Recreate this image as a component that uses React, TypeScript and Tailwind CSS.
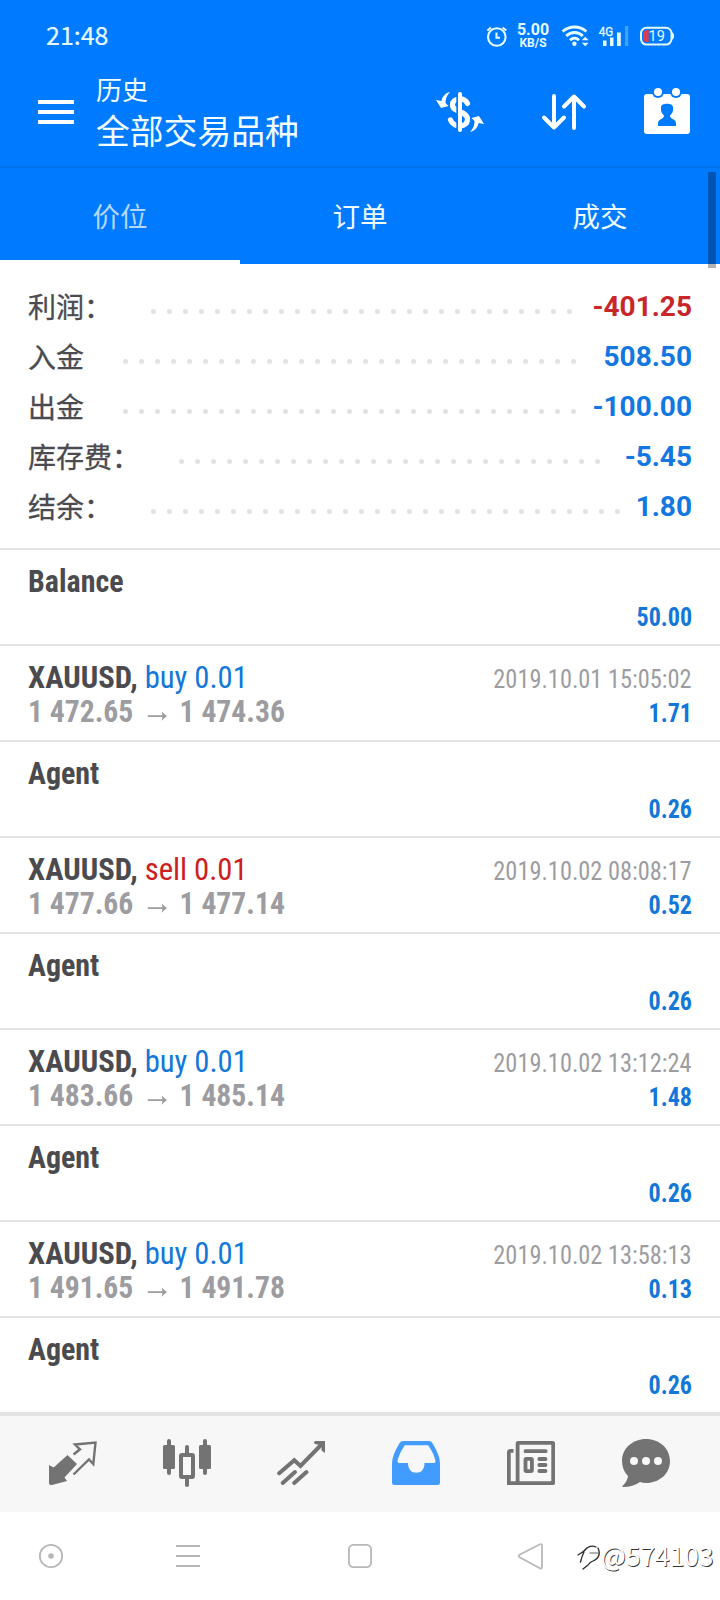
import React from "react";

type Trade = { side?: "buy" | "sell"; title: string; from?: string; to?: string; date?: string; amount: string };

const summary = [
  { label: "利润：", value: "-401.25", dots: 27, color: "text-[#c8262a]" },
  { label: "入金", value: "508.50", dots: 29, color: "text-[#1277e0]" },
  { label: "出金", value: "-100.00", dots: 29, color: "text-[#1277e0]" },
  { label: "库存费：", value: "-5.45", dots: 27, color: "text-[#1277e0]" },
  { label: "结余：", value: "1.80", dots: 30, color: "text-[#1277e0]" },
];

const trades: Trade[] = [
  { title: "Balance", amount: "50.00" },
  { title: "XAUUSD,", side: "buy", from: "1 472.65", to: "1 474.36", date: "2019.10.01 15:05:02", amount: "1.71" },
  { title: "Agent", amount: "0.26" },
  { title: "XAUUSD,", side: "sell", from: "1 477.66", to: "1 477.14", date: "2019.10.02 08:08:17", amount: "0.52" },
  { title: "Agent", amount: "0.26" },
  { title: "XAUUSD,", side: "buy", from: "1 483.66", to: "1 485.14", date: "2019.10.02 13:12:24", amount: "1.48" },
  { title: "Agent", amount: "0.26" },
  { title: "XAUUSD,", side: "buy", from: "1 491.65", to: "1 491.78", date: "2019.10.02 13:58:13", amount: "0.13" },
  { title: "Agent", amount: "0.26" },
];

function StatusBar() {
  return (
    <div className="flex h-[72px] items-start pl-[46px] pt-[24px] text-[#e6fbff]">
      <span className="-mt-[2px] w-[440px] font-['Noto_Sans_CJK_SC','Noto_Sans',sans-serif] text-[25px] leading-[24px] [-webkit-text-stroke:0.2px]">21:48</span>
      <svg className="h-6 w-[22px]" viewBox="486 24 22 24" fill="none" stroke="currentColor" strokeWidth="2.1">
        <circle cx="496.8" cy="37" r="8.8" />
        <path d="M496.5 32.5V37.7H500M487.3 30.5L491 27.5M506.3 30.5L502.6 27.5" />
      </svg>
      <div className="ml-[9px] flex w-8 flex-col items-center font-['Roboto',sans-serif] font-bold">
        <span className="text-[16px] leading-[12px]">5.00</span>
        <span className="mt-px text-[12px] leading-[12px]">KB/S</span>
      </div>
      <svg className="ml-[12px] h-6 w-[29px]" viewBox="561 24 29 24" fill="none" stroke="currentColor" strokeWidth="2.9">
        <path d="M562.6 31.5C569.5 25.5 579.500 25.5 586.4 31.5M566.2 36C571 31.4 578 31.4 582.8 36M570 40.2C572.7 37.6 576.3 37.6 579 40.2" />
        <circle cx="574.4" cy="43.7" r="2.2" fill="currentColor" stroke="none" />
        <path d="M581.8 40.3L585.2 36.8L588.6 40.3ZM581.8 42.8L585.2 46.3L588.6 42.8Z" fill="currentColor" stroke="none" />
      </svg>
      <svg className="ml-[8px] h-6 w-[32px]" viewBox="598 24 32 24" fill="currentColor">
        <text x="598.8" y="35.6" fontSize="12.5" textLength="14.5" lengthAdjust="spacingAndGlyphs" fontFamily="Roboto, sans-serif" stroke="currentColor" strokeWidth=".3">4G</text>
        <path d="M603 40.5h3.500V46H603zM610 37.5h3.500V46H610zM617 32.5h3.800V46H617z" />
        <path d="M625 26h3.200v20H625z" opacity=".3" />
      </svg>
      <svg className="ml-[9px] h-6 w-[38px]" viewBox="639 24 38 24">
        <rect x="641" y="27.8" width="30.5" height="16.8" rx="5.5" fill="none" stroke="currentColor" strokeWidth="2" />
        <path d="M643 36c0-4 1.500-6 3-6h2.700v12H646c-1.500 0-3-2-3-6z" fill="#dc3a4f" />
        <path d="M672 32.500c2.800 0 2.800 7 0 7z" fill="currentColor" />
        <text x="648.500" y="41.2" fontSize="14.5" fontFamily="Roboto, sans-serif" fill="currentColor">19</text>
      </svg>
    </div>
  );
}

function TitleBar() {
  return (
    <div className="flex h-[94px] items-start pl-[38px] text-[#f3feff]">
      <div className="mt-[28px] flex w-9 flex-col gap-[6px]">
        <span className="h-1 bg-white" />
        <span className="h-1 bg-white" />
        <span className="h-1 bg-white" />
      </div>
      <div className="-mt-px ml-[22px] flex w-[340px] flex-col font-['Noto_Sans_CJK_SC',sans-serif]">
        <span className="text-[26px] leading-[36px]">历史</span>
        <span className="text-[33.8px] leading-[45px]">全部交易品种</span>
      </div>
      <svg className="mt-[20px] h-10 w-12" viewBox="0 0 48 40" fill="white">
        <path d="M31.500 11.500C28 5 16.500 5.500 16.500 13C16.500 20.500 31.500 19 31.500 27C31.500 36 18 36.500 14.500 28" fill="none" stroke="white" strokeWidth="5.200" strokeLinecap="round" />
        <path d="M20.300 0h1.700v40h-1.700z" fill="#007aff" />
        <rect x="22" y="0" width="4" height="40" rx="2" />
        <path d="M14 0C9 1 6 5 5.500 9L0 8L5 16L12.500 14L9.500 11C9.500 7 10.500 4 14 0Z" />
        <path d="M34 40C39 39 42 35 42.500 31L48 32L43 24L35.500 26L38.500 29C38.500 33 37.500 36 34 40Z" />
      </svg>
      <svg className="ml-[57px] mt-[20px] h-10 w-12" viewBox="541 92 48 40" fill="none" stroke="white" strokeWidth="4" strokeLinecap="round" strokeLinejoin="round">
        <path d="M554 96V127.500M544 117.500L554 127.500L564 117.500M574 128V96.500M564 106.500L574 96.500L584 106.500" />
      </svg>
      <svg className="ml-[55px] mt-[16px] h-[46px] w-[46px]" viewBox="0 0 46 46">
        <rect y="6" width="46" height="40" rx="3" fill="white" />
        <circle cx="14" cy="4" r="6" fill="#007aff" />
        <circle cx="32" cy="4" r="6" fill="#007aff" />
        <circle cx="14" cy="4" r="4" fill="white" />
        <circle cx="32" cy="4" r="4" fill="white" />
        <path d="M17 19C17 14.500 29 14.500 29 19V22C29 25 26 27 26 28C26 31 32 31 32 35V38H14V35C14 31 20 31 20 28C20 27 17 25 17 22Z" fill="#007aff" />
      </svg>
    </div>
  );
}

function Tabs() {
  return (
    <div className="relative grid h-[98px] grid-cols-3 border-t-2 border-[#0070eb] text-center font-['Noto_Sans_CJK_SC',sans-serif] text-[27.5px] leading-[95px] text-[#f0fdff]">
      <span className="h-24 border-b-4 border-white text-[#b3d7ff]">价位</span>
      <span>订单</span>
      <span>成交</span>
      <div className="absolute right-1 top-[4px] h-24 w-2 bg-black/30" />
    </div>
  );
}

function Summary() {
  return (
    <div className="flex h-[284px] flex-col px-7 pt-[17px]">
      {summary.map((row) => (
        <div key={row.label} className="flex h-[50px] items-center">
          <span className="-mt-px font-['Noto_Sans_CJK_SC',sans-serif] text-[28px] leading-[50px] text-[#4a4a4f] [-webkit-text-stroke:0.3px]">{row.label}</span>
          <div className="ml-[39px] mt-[11px] flex gap-[11px]">
            {Array.from({ length: row.dots }, (_, i) => (
              <span key={i} className="h-[5px] w-[5px] rounded-full bg-[#e3e3e3]" />
            ))}
          </div>
          <span className={`ml-auto mt-[2px] font-['Roboto',sans-serif] text-[28px] font-bold leading-[50px] ${row.color}`}>{row.value}</span>
        </div>
      ))}
    </div>
  );
}

function TradeRow({ t }: { t: Trade }) {
  return (
    <div className="h-24 border-t-2 border-[#e3e3e3] px-7 pt-[14px] font-['Roboto_Condensed','Roboto',sans-serif] text-[32px] leading-[34px] [font-stretch:75%]">
      <div className="flex h-[34px] items-baseline justify-between">
        <span className={t.side ? "origin-left scale-x-[0.957] font-bold text-[#4a4a4f]" : "origin-left scale-x-[0.937] font-bold text-[#4a4a4f]"}>
          {t.title}
          {t.side && (
            <span className={t.side === "buy" ? "font-normal text-[#1277d8]" : "font-normal text-[#cc2020]"}> {t.side} 0.01</span>
          )}
        </span>
        {t.date && <span className="origin-right scale-x-[0.937] text-[26px] text-[#9c9ca1]">{t.date}</span>}
      </div>
      {t.from ? (
        <div className="flex h-[34px] items-baseline justify-between">
          <span className="flex origin-left scale-x-[0.926] items-baseline font-bold text-[#9c9ca1]">
            {t.from}
            <svg className="ml-[15px] mr-[14px] h-3 w-[21px]" viewBox="0 0 20 12" preserveAspectRatio="none" fill="currentColor">
              <path d="M0 5.300H15.500L14.500 1.500L20 6.100L14.500 10.700L15.500 6.900H0Z" />
            </svg>
            {t.to}
          </span>
          <span className="origin-right scale-x-[0.925] text-[26px] font-bold text-[#1277d8]">{t.amount}</span>
        </div>
      ) : (
        <div className="mt-[2px] flex justify-end">
          <span className="origin-right scale-x-[0.925] text-[26px] font-bold text-[#1277d8]">{t.amount}</span>
        </div>
      )}
    </div>
  );
}

function BottomBar() {
  const c = "h-12 w-12 shrink-0";
  return (
    <div className="flex h-[100px] border-t-4 border-[#e3e3e3] bg-[#f7f7f7] pl-[49px] pt-[23px] text-[#737373]">
      <svg className={c} viewBox="0 0 48 48">
        <path d="M0 26L4.700 28.500L18.500 16L28 25L15.500 38.500L18 42L3 46Q0 46 0 44Z" fill="currentColor" />
        <path d="M24.500 35.500L40 20.500L44.300 25L46.500 3.500L26 5.500L31 10.300L24.500 15.500" fill="none" stroke="currentColor" strokeWidth="2.400" />
      </svg>
      <svg className={`${c} ml-[66px]`} viewBox="0 0 48 48" fill="currentColor">
        <rect y="6" width="12" height="24" rx="1.500" />
        <rect x="4" width="4" height="36" rx="2" />
        <rect x="36" y="6" width="12" height="24" rx="1.500" />
        <rect x="40" width="4" height="36" rx="2" />
        <rect x="18" y="16" width="12" height="22" rx="1" fill="none" stroke="currentColor" strokeWidth="4" />
        <path d="M22 15V8a2 2 0 0 1 4 0V15zM22 39V46a2 2 0 0 0 4 0V39z" />
      </svg>
      <svg className={`${c} ml-[66px]`} viewBox="0 0 48 48" fill="none" stroke="currentColor" strokeWidth="4" strokeLinecap="round">
        <path d="M2.200 34.300L17.300 21.300L23.500 27L44 6" />
        <path d="M5.700 44L18 33M17.200 44L29.500 33" />
        <path d="M38 2H48V14L44.500 11.500V6.500L38 5Q36 3.500 38 2Z" fill="currentColor" stroke="none" />
      </svg>
      <svg className={`${c} ml-[67px]`} viewBox="0 0 48 48">
        <path fill="#429cff" fillRule="evenodd" d="M11 2H37Q39.500 2 41 5Q48 17 48 24V43.500Q48 46 45.500 46H2.500Q0 46 0 43.500V24Q0 17 7 5Q8.500 2 11 2ZM13.500 6.300Q12.500 6.300 12 7.500Q6.500 16 5.500 22Q5.500 24 7 24H16V25.500Q17 33.700 24.300 33.700Q31.500 33.700 32.500 25.500V24H42Q43.700 24 43.500 22Q42 15 37 7.500Q36.500 6.300 35 6.300Z" />
      </svg>
      <svg className={`${c} ml-[67px]`} viewBox="0 0 48 48" fill="none" stroke="currentColor" strokeWidth="3.800">
        <rect x="10.600" y="3.800" width="35.600" height="40.400" rx=".5" />
        <path d="M6.500 11.800H3.500Q1.800 11.800 1.800 13.500V44.200H11" />
        <path d="M18.500 12.200H38.700M32.300 20H38.500M32.300 26H38.500M32.300 32H38.500" strokeLinecap="round" />
        <rect x="18.500" y="19.800" width="6.400" height="12.300" rx=".8" />
      </svg>
      <svg className={`${c} ml-[67px]`} viewBox="0 0 48 48">
        <path d="M24 0C37.500 0 48 9.500 48 22S37.500 44 24 44Q21 44 18 43Q11 48 1 48Q-.5 48 1 46.500Q5.500 42 6 37Q0 31 0 22C0 9.500 10.500 0 24 0Z" fill="currentColor" />
        <circle cx="12" cy="22" r="4" fill="#f7f7f7" />
        <circle cx="24" cy="22" r="4" fill="#f7f7f7" />
        <circle cx="36" cy="22" r="4" fill="#f7f7f7" />
      </svg>
    </div>
  );
}

function SystemNav() {
  return (
    <div className="flex h-[88px] items-start bg-white pl-[38px] pt-[31px] text-[#b8b8b8]">
      <svg className="h-[26px] w-[26px] shrink-0" viewBox="0 0 26 26" fill="none" stroke="currentColor" strokeWidth="1.800">
        <circle cx="13" cy="13" r="11.200" />
        <circle cx="13" cy="13" r="2.800" fill="currentColor" stroke="none" />
      </svg>
      <svg className="ml-[111px] h-[26px] w-[26px] shrink-0" viewBox="0 0 26 26" stroke="currentColor" strokeWidth="2">
        <path d="M1 3H25M1 13H25M1 23H25" />
      </svg>
      <svg className="ml-[146px] h-[26px] w-[26px] shrink-0" viewBox="0 0 26 26" fill="none" stroke="currentColor" strokeWidth="1.800">
        <rect x="1.900" y="1.900" width="22.200" height="22.200" rx="4.500" />
      </svg>
      <svg className="ml-[144px] h-[28px] w-[28px] shrink-0" viewBox="0 0 28 28" fill="none" stroke="currentColor" strokeWidth="1.800" strokeLinejoin="round">
        <path d="M3 11.500L22.500 1.500Q25 .5 25 3V23.500Q25 26.500 22.500 25L3 14.500Q.8 13 3 11.500Z" />
      </svg>
      <div className="ml-[32px] flex shrink-0 items-start text-white">
        <svg className="h-[30px] w-[24px]" viewBox="-1 0 24 30" fill="none" stroke="#2a2a2a" strokeWidth="1.300" strokeLinecap="round">
          <path d="M0 12Q6 9 9 5Q13 2 18 4M6 9Q4 13 2.500 19" />
          <path d="M12 10H20" stroke="#999" />
          <path d="M20 5Q24 14 15 18Q12 19 10 22L5 26" />
        </svg>
        <span className="-mt-[2px] font-['Noto_Sans_CJK_SC',sans-serif] text-[26.300px] leading-[28px] [text-shadow:0.8px_0.8px_0.6px_#333]">@574103</span>
      </div>
    </div>
  );
}

export default function App() {
  return (
    <div className="flex h-[1600px] w-[720px] flex-col overflow-hidden bg-white">
      <header className="bg-[#007aff]">
        <StatusBar />
        <TitleBar />
        <Tabs />
      </header>
      <Summary />
      <main>
        {trades.map((t, i) => (
          <TradeRow key={i} t={t} />
        ))}
      </main>
      <BottomBar />
      <SystemNav />
    </div>
  );
}
